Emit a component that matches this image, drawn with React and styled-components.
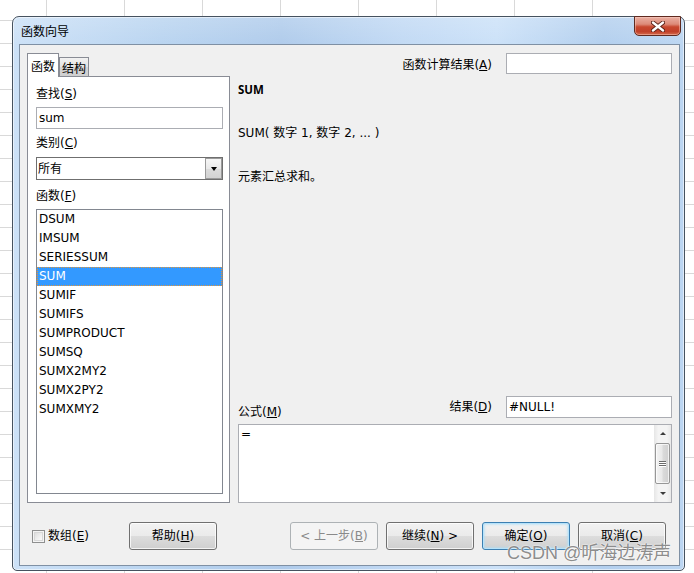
import React from "react";
import styled, { createGlobalStyle, css } from "styled-components";

const GlobalStyle = createGlobalStyle`
  html, body { margin: 0; padding: 0; }
  body {
    width: 694px;
    height: 573px;
    overflow: hidden;
    background-color: #fff;
    background-image:
      repeating-linear-gradient(to right, transparent 0 77px, #d9d9d9 77px 78px),
      repeating-linear-gradient(to bottom, transparent 0 22px, #d9d9d9 22px 23px);
    background-position: -31px 0, 0 -2px;
    font-family: "DejaVu Sans", "Noto Sans CJK SC", sans-serif;
    font-size: 12px;
    color: #000;
  }
  #root { width: 694px; height: 573px; }
`;

const Page = styled.div`
  position: relative;
  width: 694px;
  height: 573px;
  box-sizing: border-box;
  padding: 16px 0 0 12px;
`;

const Window = styled.div`
  width: 673px;
  height: 555px;
  box-sizing: border-box;
  border: 1px solid #46525f;
  border-radius: 7px 7px 5px 5px;
  padding: 0 4px 4px 6px;
  display: flex;
  flex-direction: column;
  background:
    linear-gradient(to bottom, rgba(255, 255, 255, 0.18), rgba(255, 255, 255, 0) 30px),
    linear-gradient(
      to right,
      #cce1f7 0%,
      #b9d4f0 22%,
      #afcbeb 40%,
      #c1d9f4 58%,
      #cbe1f8 72%,
      #b3cfee 88%,
      #bcd6f2 100%
    );
  box-shadow: inset 0 0 0 1px rgba(255, 255, 255, 0.55);
`;

const TitleBar = styled.div`
  flex: none;
  height: 27px;
  display: flex;
  align-items: flex-start;
`;

const Title = styled.div`
  margin: 6px 0 0 2px;
  line-height: 16px;
  font-family: "Noto Sans CJK SC", sans-serif;
  font-size: 12px;
  color: #000;
`;

const CloseButton = styled.div`
  margin-left: auto;
  margin-top: -1px;
  margin-right: -1px;
  width: 47px;
  height: 20px;
  box-sizing: border-box;
  border: 1px solid #5f2a20;
  border-radius: 0 0 5px 5px;
  background: linear-gradient(
    to bottom,
    #eab0a3 0%,
    #dd8a78 40%,
    #c8482f 55%,
    #c14029 80%,
    #d46a4c 100%
  );
  box-shadow: inset 0 0 0 1px rgba(255, 210, 200, 0.45);
  display: flex;
  align-items: center;
  justify-content: center;
`;

const Client = styled.div`
  flex: 1;
  min-height: 0;
  border: 1px solid #7f90a4;
  background: #f0f0f0;
  padding: 8px 7px 15px 7px;
  display: flex;
  flex-direction: column;
`;

const Main = styled.div`
  flex: none;
  height: 450px;
  display: grid;
  grid-template-columns: 203px 1fr;
  column-gap: 8px;
`;

const LeftCol = styled.div`
  display: flex;
  flex-direction: column;
  min-height: 0;
`;

const TabRow = styled.div`
  flex: none;
  height: 23px;
  display: flex;
  align-items: flex-end;
  position: relative;
  z-index: 1;
`;

const Tab = styled.div`
  box-sizing: border-box;
  border: 1px solid #898c95;
  border-bottom: none;
  font-family: "Noto Sans CJK SC", sans-serif;
  font-size: 12px;
  ${(p) =>
    p.$active
      ? css`
          height: 24px;
          margin-bottom: -1px;
          padding: 2px 3px 0;
          line-height: 20px;
          background: #fff;
        `
      : css`
          height: 19px;
          padding: 1px 2px 0;
          line-height: 18px;
          background: linear-gradient(to bottom, #f2f2f2, #e2e2e2 50%, #d6d6d6 51%, #cfcfcf);
        `}
`;

const Panel = styled.div`
  flex: 1;
  min-height: 0;
  background: #fff;
  border: 1px solid #898c95;
  padding: 9px 6px 8px 8px;
  display: flex;
  flex-direction: column;
`;

const Label = styled.div`
  flex: none;
  height: 16px;
  line-height: 16px;
  margin-top: ${(p) => p.$mt || 0}px;
  white-space: nowrap;
`;

const U = styled.u`
  text-decoration: underline;
  text-underline-offset: 1px;
`;

const TextInput = styled.div`
  flex: none;
  height: 22px;
  box-sizing: border-box;
  margin-top: 5px;
  border: 1px solid #abadb3;
  background: #fff;
  padding: 0 2px;
  line-height: 20px;
`;

const SelectBox = styled.div`
  flex: none;
  height: 23px;
  box-sizing: border-box;
  margin-top: 6px;
  border: 1px solid #6f6f6f;
  background: #fff;
  display: flex;
  align-items: center;
  padding-left: 1px;
`;

const SelectText = styled.span`
  line-height: 16px;
`;

const SelectArrow = styled.div`
  margin-left: auto;
  width: 17px;
  height: 21px;
  box-sizing: border-box;
  border: 1px solid #9a9a9a;
  background: linear-gradient(to bottom, #f6f6f6, #e9e9e9 50%, #dcdcdc 51%, #d2d2d2);
  display: flex;
  align-items: center;
  justify-content: center;
  &::after {
    content: "";
    width: 0;
    height: 0;
    border-left: 3.5px solid transparent;
    border-right: 3.5px solid transparent;
    border-top: 4px solid #000;
  }
`;

const ListBox = styled.div`
  flex: 1;
  min-height: 0;
  margin-top: 5px;
  border: 1px solid #828790;
  background: #fff;
  overflow: hidden;
  display: flex;
  flex-direction: column;
`;

const ListItem = styled.div`
  flex: none;
  height: 19px;
  box-sizing: border-box;
  line-height: 19px;
  padding-left: 2px;
  white-space: nowrap;
  ${(p) =>
    p.$selected &&
    css`
      background: #3399ff;
      color: #fff;
      border: 1px dotted #e0953a;
      line-height: 17px;
      padding-left: 1px;
    `}
`;

const RightCol = styled.div`
  display: flex;
  flex-direction: column;
  min-width: 0;
`;

const TopRow = styled.div`
  flex: none;
  height: 21px;
  display: flex;
  align-items: center;
  justify-content: flex-end;
  gap: 14px;
`;

const ValueBox = styled.div`
  flex: none;
  width: 166px;
  height: ${(p) => p.$h}px;
  box-sizing: border-box;
  border: 1px solid #abadb3;
  background: #fff;
  padding: 0 2px;
  line-height: ${(p) => p.$h - 2}px;
`;

const FuncName = styled.div`
  flex: none;
  margin-top: 8px;
  line-height: 16px;
  font-family: "Noto Sans", sans-serif;
  font-weight: 700;
  font-size: 11.5px;
`;

const Text = styled.div`
  flex: none;
  margin-top: ${(p) => p.$mt}px;
  line-height: 16px;
  white-space: nowrap;
`;

const Spacer = styled.div`
  flex: 1;
`;

const ResultRow = styled.div`
  flex: none;
  height: 22px;
  display: flex;
  align-items: center;
`;

const FormulaLabel = styled.div`
  align-self: flex-end;
  margin-bottom: -2px;
  line-height: 16px;
`;

const ResultLabel = styled.div`
  margin-left: auto;
  margin-right: 14px;
  line-height: 16px;
`;

const FormulaBox = styled.div`
  flex: none;
  margin-top: 6px;
  height: 79px;
  box-sizing: border-box;
  border: 1px solid #abadb3;
  background: #fff;
  display: flex;
`;

const FormulaText = styled.div`
  flex: 1;
  padding: 1px 0 0 2px;
  line-height: 16px;
`;

const ScrollBar = styled.div`
  flex: none;
  width: 17px;
  display: flex;
  flex-direction: column;
  background: linear-gradient(to right, #e6e6e6, #f4f4f4 25%, #f4f4f4 75%, #e9e9e9);
`;

const ScrollArrow = styled.div`
  flex: none;
  height: 17px;
  display: flex;
  align-items: center;
  justify-content: center;
  &::after {
    content: "";
    width: 0;
    height: 0;
    border-left: 3px solid transparent;
    border-right: 3px solid transparent;
    ${(p) =>
      p.$up
        ? css`
            border-bottom: 3px solid #3c3c3c;
          `
        : css`
            border-top: 3px solid #3c3c3c;
          `}
  }
`;

const Thumb = styled.div`
  flex: 1;
  margin: 1px;
  box-sizing: border-box;
  border: 1px solid #979797;
  border-radius: 2px;
  background: linear-gradient(to right, #f3f3f3, #e9e9e9 45%, #dadada 55%, #d0d0d0);
  box-shadow: inset 0 0 0 1px rgba(255, 255, 255, 0.7);
  display: flex;
  flex-direction: column;
  align-items: center;
  justify-content: center;
  gap: 1px;
`;

const Grip = styled.div`
  width: 7px;
  height: 1px;
  background: #6b6b6b;
  box-shadow: 0 1px 0 #fff;
`;

const ButtonRow = styled.div`
  flex: none;
  margin-top: 19px;
  height: 28px;
  display: flex;
  align-items: center;
  padding: 0 6px 0 5px;
`;

const CheckGroup = styled.div`
  flex: none;
  width: 97px;
  display: flex;
  align-items: center;
  gap: 3px;
  line-height: 16px;
`;

const CheckBox = styled.div`
  width: 13px;
  height: 13px;
  box-sizing: border-box;
  border: 1px solid #8e8f8f;
  background: linear-gradient(135deg, #d6d6d6, #f6f6f6 70%, #fdfdfd);
  box-shadow: inset 0 0 0 1px #f4f4f4, inset 0 0 0 2px #d7d7d7;
`;

const Button = styled.button`
  flex: none;
  width: 88px;
  height: 28px;
  box-sizing: border-box;
  padding: 0;
  border-radius: 3px;
  font-family: inherit;
  font-size: 12px;
  line-height: 16px;
  color: #000;
  border: 1px solid #707070;
  background: linear-gradient(to bottom, #f2f2f2 0%, #ebebeb 49%, #dddddd 50%, #cfcfcf 100%);
  box-shadow: inset 0 0 0 1px rgba(255, 255, 255, 0.75);
  ${(p) =>
    p.$variant === "disabled" &&
    css`
      color: #8a8a8a;
      border-color: #adb2b5;
      background: #f4f4f4;
      box-shadow: none;
    `}
  ${(p) =>
    p.$variant === "default" &&
    css`
      border-color: #3c7fb1;
      box-shadow: inset 0 0 0 1px #b6e3fb, inset 0 0 2px 2px rgba(173, 220, 245, 0.6);
    `}
`;

const RightButtons = styled.div`
  margin-left: auto;
  display: flex;
  gap: 8px;
`;

const Watermark = styled.div`
  position: absolute;
  left: 507px;
  top: 542px;
  font-family: "Liberation Sans", "Noto Sans CJK SC", sans-serif;
  font-size: 18px;
  line-height: 22px;
  color: rgba(110, 110, 110, 0.8);
  text-shadow: 0 0 1px #fff, 0 0 2px #fff;
  white-space: nowrap;
  pointer-events: none;
`;

const CloseIcon = () => (
  <svg width="14" height="11" viewBox="0 0 14 11">
    <path d="M2 1.5 L12 9.5 M12 1.5 L2 9.5" stroke="#5a2118" strokeWidth="4.2" strokeLinecap="round" />
    <path d="M2 1.5 L12 9.5 M12 1.5 L2 9.5" stroke="#ffffff" strokeWidth="2.4" strokeLinecap="round" />
  </svg>
);

const functions = [
  "DSUM",
  "IMSUM",
  "SERIESSUM",
  "SUM",
  "SUMIF",
  "SUMIFS",
  "SUMPRODUCT",
  "SUMSQ",
  "SUMX2MY2",
  "SUMX2PY2",
  "SUMXMY2",
];

export default function App() {
  return (
    <>
      <GlobalStyle />
      <Page>
        <Window>
          <TitleBar>
            <Title>函数向导</Title>
            <CloseButton>
              <CloseIcon />
            </CloseButton>
          </TitleBar>
          <Client>
            <Main>
              <LeftCol>
                <TabRow>
                  <Tab $active>函数</Tab>
                  <Tab>结构</Tab>
                </TabRow>
                <Panel>
                  <Label>
                    查找(<U>S</U>)
                  </Label>
                  <TextInput>sum</TextInput>
                  <Label $mt={6}>
                    类别(<U>C</U>)
                  </Label>
                  <SelectBox>
                    <SelectText>所有</SelectText>
                    <SelectArrow />
                  </SelectBox>
                  <Label $mt={8}>
                    函数(<U>F</U>)
                  </Label>
                  <ListBox>
                    {functions.map((f) => (
                      <ListItem key={f} $selected={f === "SUM"}>
                        {f}
                      </ListItem>
                    ))}
                  </ListBox>
                </Panel>
              </LeftCol>
              <RightCol>
                <TopRow>
                  <span>
                    函数计算结果(<U>A</U>)
                  </span>
                  <ValueBox $h={21} />
                </TopRow>
                <FuncName>SUM</FuncName>
                <Text $mt={27}>SUM( 数字 1, 数字 2, ... )</Text>
                <Text $mt={28}>元素汇总求和。</Text>
                <Spacer />
                <ResultRow>
                  <FormulaLabel>
                    公式(<U>M</U>)
                  </FormulaLabel>
                  <ResultLabel>
                    结果(<U>D</U>)
                  </ResultLabel>
                  <ValueBox $h={22}>#NULL!</ValueBox>
                </ResultRow>
                <FormulaBox>
                  <FormulaText>=</FormulaText>
                  <ScrollBar>
                    <ScrollArrow $up />
                    <Thumb>
                      <Grip />
                      <Grip />
                      <Grip />
                    </Thumb>
                    <ScrollArrow />
                  </ScrollBar>
                </FormulaBox>
              </RightCol>
            </Main>
            <ButtonRow>
              <CheckGroup>
                <CheckBox />
                <span>
                  数组(<U>E</U>)
                </span>
              </CheckGroup>
              <Button>
                帮助(<U>H</U>)
              </Button>
              <RightButtons>
                <Button $variant="disabled">
                  &lt; 上一步(<U>B</U>)
                </Button>
                <Button>
                  继续(<U>N</U>) &gt;
                </Button>
                <Button $variant="default">
                  确定(<U>O</U>)
                </Button>
                <Button>
                  取消(<U>C</U>)
                </Button>
              </RightButtons>
            </ButtonRow>
          </Client>
        </Window>
        <Watermark>CSDN @听海边涛声</Watermark>
      </Page>
    </>
  );
}
